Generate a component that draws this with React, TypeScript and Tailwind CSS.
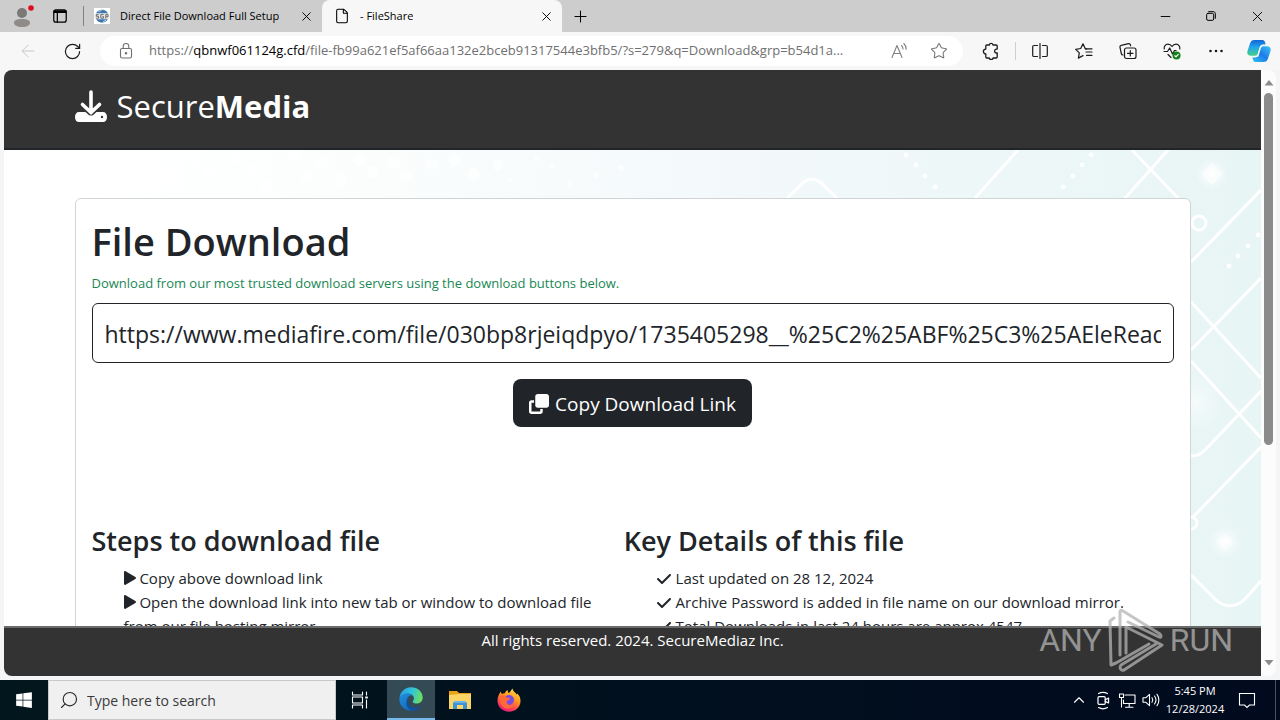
import type { ReactNode } from "react";
import { ArrowLeft, ChevronUp, File, Minus, Plus, RotateCw, Search, Star, X } from "lucide-react";
import { FaCheck, FaClone, FaWindows } from "react-icons/fa6";

// ─── Data ─────────────────────────────────────────────────────────────────────

const STEPS = [
  "Copy above download link",
  "Open the download link into new tab or window to download file from our file hosting mirror.",
];

const DETAILS = [
  "Last updated on 28 12, 2024",
  "Archive Password is added in file name on our download mirror.",
  "Total Downloads in last 24 hours are approx 4547",
];

const DOWNLOAD_URL =
  "https://www.mediafire.com/file/030bp8rjeiqdpyo/1735405298__%25C2%25ABF%25C3%25AEleReady_Full_Setup.zip";

const URL_PATH = "/file-fb99a621ef5af66aa132e2bceb91317544e3bfb5/?s=279&q=Download&grp=b54d1a...";

// ─── Icons ────────────────────────────────────────────────────────────────────

function Line({ size = 18, width = 1.1, children }: { size?: number; width?: number; children: ReactNode }) {
  return (
    <svg
      width={size}
      height={size}
      viewBox="0 0 18 18"
      fill="none"
      stroke="currentColor"
      strokeWidth={width}
      strokeLinecap="round"
      strokeLinejoin="round"
      aria-hidden="true"
    >
      {children}
    </svg>
  );
}

function Avatar() {
  return (
    <svg width="24" height="22" viewBox="-1 0 24 22" aria-hidden="true">
      <circle cx="11" cy="8" r="5" fill="#7b7876" />
      <path d="M3 18c0-3 3-4 8-4s8 1 8 4c0 2-3 4-8 4s-8-2-8-4z" fill="#8e8b89" />
      <circle cx="20" cy="3" r="2.800" fill="#e00b1c" />
    </svg>
  );
}

function Workspaces() {
  return (
    <Line size={16} width={1.4}>
      <rect x="2" y="2" width="14" height="14" rx="2.500" />
      <path d="M2 5h14M6 5v11" />
      <path d="M3 3.600h12" strokeWidth="2.400" />
    </Line>
  );
}

function SiteGlobe() {
  return (
    <svg width="16" height="16" viewBox="0 0 16 16" className="shrink-0" aria-hidden="true">
      <rect width="16" height="16" fill="#fff" />
      <circle cx="8" cy="8" r="6.600" fill="#8eb4d6" />
      <path d="M2.500 5A6.600 6.600 0 0 1 13.500 5zM2.500 11.500a6.600 6.600 0 0 0 11 0z" fill="#3d77ac" />
      <path d="M4.500 3.500l3-1M9 13.800l3-1.500" stroke="#dce9f3" strokeWidth=".8" />
      <rect x="0.500" y="5.500" width="15" height="5.500" rx="1" fill="#e6e8ea" />
      <path
        d="M4.600 6.600H2.400v1.700h2.200v1.900H2.200M9.600 6.600H6.800v3.600h2.800V8.600H8.400M11.800 10.600v-4h2.200v2.200h-2"
        fill="none"
        stroke="#6d6a68"
        strokeWidth="1"
      />
    </svg>
  );
}

function LockGlyph() {
  return (
    <Line>
      <rect x="3.500" y="6.500" width="11" height="9.500" rx="1.600" />
      <path d="M6.200 6.500V4.300a2.800 2.800 0 0 1 5.600 0v2.200" />
      <circle cx="9" cy="11.300" r=".7" fill="currentColor" />
    </Line>
  );
}

function ReadAloud() {
  return (
    <Line>
      <path d="M2 15.500L7 3.500l5 12M3.700 11.500h6.600" />
      <path d="M11.500 3.500c1 .9 1.500 2 1.500 3.500M13.800 1.500c1.600 1.500 2.400 3.400 2.400 5.700" />
    </Line>
  );
}

function Extensions() {
  return (
    <Line width={1.3}>
      <path d="M4.800 3h2.400a2 2 0 0 1 3.900 0h3.100c.6 0 1 .4 1 1v3.100h-1.100a2 2 0 0 0 0 3.900h1.100V15c0 .6-.4 1-1 1h-3.100a2 2 0 0 1-3.900 0H4.800c-.6 0-1-.4-1-1v-3.100a2 2 0 0 1 0-4.800V4c0-.6.4-1 1-1z" />
    </Line>
  );
}

function SplitScreen() {
  return (
    <Line width={1.2}>
      <path d="M6.500 3.500H3c-.8 0-1.300.5-1.300 1.300v8.400c0 .8.500 1.300 1.300 1.300h3.500M11.500 3.500H15c.8 0 1.300.5 1.300 1.300v8.400c0 .8-.5 1.300-1.300 1.300h-3.500M9 1.500v15" />
    </Line>
  );
}

function Favorites() {
  return (
    <Line width={1.2}>
      <path d="M11.500 6.800h-1.200L8 1.800 5.700 6.500l-5 .8 3.600 3.600-.9 5.200L8 13.600" />
      <path d="M10.500 6.800H17M11 10h6M11.500 13.300H17" />
    </Line>
  );
}

function Collections() {
  return (
    <Line width={1.2}>
      <path d="M4 13c-1 0-1.500-.6-1.700-1.500L1 5.300c-.2-1 .3-1.700 1.200-1.900l7.300-1.700c1-.2 1.600.2 1.900 1.100l.3 1" />
      <rect x="5.500" y="6" width="11.500" height="10.500" rx="2" />
      <path d="M11.300 8.500v5.500M8.500 11.300H14" />
    </Line>
  );
}

function Performance() {
  return (
    <Line width={1.2}>
      <path d="M8 15.500L5 12.500M1.200 7C.8 4.300 2.500 2.200 4.900 2.200c1.700 0 3.100.8 4.100 2.300 1-1.500 2.400-2.300 4.100-2.300 2.400 0 4.100 2.100 3.700 4.800" />
      <path d="M1 9.500h3.500L6.700 6l2.800 6 2-3.500H13" />
      <circle cx="13.500" cy="13.500" r="4" fill="#13801a" stroke="none" />
      <path d="M11.800 13.800l1.200 1 2.200-2.400" stroke="#fff" />
    </Line>
  );
}

function Copilot() {
  return (
    <svg width="24" height="24" viewBox="0 0 24 24" aria-hidden="true">
      <defs>
        <linearGradient id="cpA" x1="0" y1="0" x2="0" y2="1">
          <stop offset="0" stopColor="#1264d3" />
          <stop offset=".45" stopColor="#1fa4ec" />
          <stop offset="1" stopColor="#48cf87" />
        </linearGradient>
        <linearGradient id="cpB" x1="1" y1="0" x2="0" y2="1">
          <stop offset="0" stopColor="#3ac6f2" />
          <stop offset=".5" stopColor="#1f7bea" />
          <stop offset="1" stopColor="#2fc4f0" />
        </linearGradient>
      </defs>
      <path
        d="M7.500 1h7.800c1.500 0 2.200.9 2.700 2.300l.6 2.200h-2.400c-2 0-2.900 1-3.500 3l-1.800 6c-.5 1.500-1.200 2.200-2.900 2.200H3.800C.8 16.700-.2 14.600.5 12L3 4.500C3.800 2 5 1 7.500 1z"
        fill="url(#cpA)"
      />
      <path
        d="M16.500 23H8.700c-1.500 0-2.200-.9-2.700-2.300l-.6-2.200h2.400c2 0 2.900-1 3.500-3l1.800-6c.5-1.500 1.200-2.200 2.900-2.200h4.200c3 0 4 2.100 3.300 4.700L21 19.500C20.200 22 19 23 16.500 23z"
        fill="url(#cpB)"
      />
      <path d="M12.600 8.700c.5-1.400 1.200-1.700 3-1.700-1.500 1-1.800 2.500-2.400 4.500l-1.500 5c-.5 1.200-1.200 1.700-2.600 1.500 1-.8 1.300-1.800 1.700-3.300z" fill="#f7f7f7" />
    </svg>
  );
}

function DownloadLogo() {
  return (
    <svg width="32" height="32" viewBox="0 0 32 32" aria-hidden="true">
      <path
        d="M4 22h6.500l3 2.700c1.500 1.200 3.500 1.200 5 0l3-2.700H28c2.500 0 4 2 4 5s-1.500 5-4 5H4c-2.500 0-4-2-4-5s1.500-5 4-5z"
        fill="#fff"
      />
      <path d="M16 2v20M7.500 14.500L16 22.500l8.500-8" fill="none" stroke="#fff" strokeWidth="3.600" strokeLinecap="round" />
      <circle cx="27" cy="27" r="1.200" fill="#333" />
    </svg>
  );
}

function PlayMark() {
  return (
    <svg width="12" height="14" viewBox="0 0 12 14" className="inline-block align-[-1px]" aria-hidden="true">
      <path d="M0 1.200C0 .3.800-.2 1.600.3L11.400 6c.8.500.8 1.500 0 2l-9.800 5.700c-.8.500-1.600 0-1.600-.9z" fill="currentColor" />
    </svg>
  );
}

function TaskView() {
  return (
    <Line>
      <path d="M1.500 1v3h10V1M1.500 17v-3h10v3M1.500 6h10v6h-10zM15.500 1v3M15.500 9v8" />
      <path d="M15.500 5.500v2" strokeWidth="2.600" strokeLinecap="butt" />
    </Line>
  );
}

function Edge() {
  return (
    <svg width="24" height="24" viewBox="0 0 24 24" aria-hidden="true">
      <defs>
        <linearGradient id="edTop" x1="0" y1=".3" x2="1" y2=".5">
          <stop offset="0" stopColor="#2a9ee6" />
          <stop offset=".5" stopColor="#2fc3dd" />
          <stop offset="1" stopColor="#6fe05a" />
        </linearGradient>
        <linearGradient id="edBody" x1="0" y1="0" x2="1" y2="1">
          <stop offset="0" stopColor="#1f8fe0" />
          <stop offset="1" stopColor="#0f5cae" />
        </linearGradient>
      </defs>
      <path d="M.5 11C1.300 4.700 6 .3 12 .3c7 0 11.700 4.900 11.700 10.200 0 3.700-2.700 6-6 6-2.300 0-4-.8-4-1.800 0-.7 1.200-1.200 1.200-3.200 0-2.600-2.400-4.700-6-4.700C5 6.800 1.800 8.500.5 11z" fill="url(#edTop)" />
      <path d="M.4 12.500c0-3.700 3.700-6 8-6 2 0 3.700.5 4.700 1.500-2.400.2-5.200 2-5.200 5.700 0 4.800 4.300 7.300 8.300 7.300 2.200 0 4.100-.6 5.600-1.500-2 2.600-5.300 4.300-9.300 4.300C5.800 23.800.4 19 .4 12.500z" fill="url(#edBody)" />
      <path d="M9 11.200c-1.600 5.500 3 9.800 8.200 9.800 1.800 0 3.500-.5 4.600-1.500-1 2-4.300 4.200-8 4.200-5.500 0-8.500-8.700-4.800-12.500z" fill="#124f9c" />
    </svg>
  );
}

function Folder() {
  return (
    <svg width="24" height="20" viewBox="0 0 24 20" aria-hidden="true">
      <path d="M1 1h8l2 2h12v3H1z" fill="#e8a317" />
      <path d="M1 5l10-1h12v15H1z" fill="#fbd566" />
      <path d="M5 19v-6l2-2h10l2 2v6h-4v-4H9v4z" fill="#3d93d6" />
      <path d="M7 11h10l1.500 2h-13z" fill="#69b3e8" />
    </svg>
  );
}

function Firefox() {
  return (
    <svg width="24" height="24" viewBox="0 0 24 24" aria-hidden="true">
      <defs>
        <linearGradient id="ffBody" x1=".8" y1="0" x2=".3" y2="1">
          <stop offset="0" stopColor="#ffe14a" />
          <stop offset=".4" stopColor="#ff9a1f" />
          <stop offset=".75" stopColor="#ff4055" />
          <stop offset="1" stopColor="#e3197f" />
        </linearGradient>
      </defs>
      <path
        d="M3.500 3.500c.3 1 .8 1.800 1.500 2.400.8-.4 1.800-.6 2.700-.5C8.300 3.700 9.400 2.600 11 2c-.4.900-.3 1.800.2 2.600C12.600 5.600 13.200 3 15.600.5c.2 2 1.200 3 2.700 4.300.7.600 1.200 1.300 1.500 2 .2-.5.2-1 .1-1.500C22.600 7.600 23.500 10 23.500 13c0 6-5 10.700-11.500 10.700S.5 19 .5 12.500C.5 8.700 2 6.500 3.500 3.500z"
        fill="url(#ffBody)"
      />
      <circle cx="12" cy="12" r="5" fill="#7a4be0" />
      <path d="M3 8c3-1.500 5-.5 6.500 1.500 1.500.3 3 .3 3.500 1-.5 1.800-3 1.800-3.500 3.500 1 3.500 5 4 7.500 2-1.500 3.500-4 5-7.500 4.500-5-1-7-6-6.500-12.500z" fill="#ff6a36" />
    </svg>
  );
}

function MeetNow() {
  return (
    <Line size={20}>
      <rect x="4.500" y="6" width="6.500" height="7" rx="1" />
      <path d="M11 8.800l3-1.500v4.400l-3-1.500M5 3.200c2.500-1.400 5.500-1.400 8 0M5 15.800c2.500 1.400 5.500 1.400 8 0" />
    </Line>
  );
}

function Network() {
  return (
    <Line>
      <path d="M7 4h10v8.500H5.500V9M11.200 12.500V16M7.500 16.300h7.500M1.500 3h4v3.500h-4zM3.500 6.500v9.500" />
    </Line>
  );
}

function Volume() {
  return (
    <Line>
      <path d="M1 6.800h2.700l3.800-3.500v11.400l-3.800-3.500H1zM10 6.700c.9 1.300.9 3.300 0 4.600M12.500 5c1.700 2.300 1.700 5.700 0 8M15 3.300c2.500 3.300 2.500 8.100 0 11.400" />
    </Line>
  );
}

function Notifications() {
  return (
    <Line>
      <path d="M1.500 2.500h15v11.500h-5L9 16.500 6.500 14h-5z" strokeLinejoin="miter" />
    </Line>
  );
}

// ─── Browser window ───────────────────────────────────────────────────────────

function Tab({ icon, title, active = false }: { icon: ReactNode; title: string; active?: boolean }) {
  return (
    <div className={`flex w-60 items-center gap-2.5 pr-2 pl-3 ${active ? "rounded-t-lg bg-[#f7f7f7]" : ""}`}>
      <button className="flex min-w-0 flex-1 items-center gap-2.5 text-left">
        {icon}
        <span className="truncate whitespace-pre text-[11px]">{title}</span>
      </button>
      <button aria-label={`Close ${title}`}>
        <X size={15} strokeWidth={1.5} />
      </button>
    </div>
  );
}

function ToolButton({ label, children }: { label: string; children: ReactNode }) {
  return (
    <button aria-label={label} className="flex w-11 shrink-0 items-center justify-center">
      {children}
    </button>
  );
}

function TabStrip() {
  return (
    <div className="flex h-8 shrink-0 bg-[#cdcdcd] text-black">
      <button aria-label="Profile" className="flex w-11 items-center justify-center">
        <Avatar />
      </button>
      <button aria-label="Workspaces" className="flex w-8 items-center justify-center">
        <Workspaces />
      </button>
      <div className="my-1.5 mr-[-2px] ml-[7px] w-px bg-[#808080]" />
      <Tab icon={<SiteGlobe />} title="Direct File Download Full Setup" />
      <Tab active icon={<File size={16} strokeWidth={1.6} className="shrink-0" />} title="- FileShare" />
      <button aria-label="New tab" className="flex w-9 items-center justify-center">
        <Plus size={19} strokeWidth={1.3} />
      </button>
      <div className="ml-auto flex">
        <button aria-label="Minimize" className="flex w-[46px] items-center justify-center">
          <Minus size={15} strokeWidth={1.5} />
        </button>
        <button aria-label="Restore" className="flex w-[46px] items-center justify-center">
          <Line size={12} width={1.5}>
            <rect x="2.500" y="5" width="10.500" height="10.500" rx="2" />
            <path d="M5.500 2.500h7c1.700 0 3 1.300 3 3v7" />
          </Line>
        </button>
        <button aria-label="Close" className="flex w-[46px] items-center justify-center">
          <X size={17} strokeWidth={1.3} />
        </button>
      </div>
    </div>
  );
}

function Toolbar() {
  return (
    <div className="flex h-[38px] shrink-0 bg-[#f7f7f7] pl-1.5 text-[#1b1b1b]">
      <button aria-label="Back" className="flex w-11 shrink-0 items-center justify-center text-[#c8c8c8]">
        <ArrowLeft size={20} strokeWidth={1.2} />
      </button>
      <ToolButton label="Refresh">
        <RotateCw size={19} strokeWidth={1.5} />
      </ToolButton>
      <div className="mx-1.5 my-1 flex min-w-0 flex-1 items-center rounded-full bg-white pr-1 pl-[17px] text-[13px] text-[#707070]">
        <LockGlyph />
        <label htmlFor="address" className="ml-3.5">
          https://<span className="text-black">qbnwf061124g.cfd</span>
        </label>
        <input
          id="address"
          readOnly
          defaultValue={URL_PATH}
          className="min-w-0 flex-1 bg-transparent text-ellipsis outline-none"
        />
        <button aria-label="Read aloud" className="flex w-10 shrink-0 items-center justify-center text-[#808080]">
          <ReadAloud />
        </button>
        <button aria-label="Add to favorites" className="flex w-10 shrink-0 items-center justify-center text-[#767676]">
          <Star size={18} strokeWidth={1.4} />
        </button>
      </div>
      <ToolButton label="Extensions">
        <Extensions />
      </ToolButton>
      <div className="mx-0.5 my-2.5 w-px shrink-0 bg-[#cfcfcf]" />
      <ToolButton label="Split screen">
        <SplitScreen />
      </ToolButton>
      <ToolButton label="Favorites">
        <Favorites />
      </ToolButton>
      <ToolButton label="Collections">
        <Collections />
      </ToolButton>
      <ToolButton label="Browser essentials">
        <Performance />
      </ToolButton>
      <ToolButton label="Settings and more">
        <svg width="14" height="4" viewBox="0 0 14 4" fill="currentColor" aria-hidden="true">
          <circle cx="1.500" cy="2" r="1.300" />
          <circle cx="7" cy="2" r="1.300" />
          <circle cx="12.500" cy="2" r="1.300" />
        </svg>
      </ToolButton>
      <button aria-label="Copilot" className="flex w-[42px] shrink-0 items-center justify-center">
        <Copilot />
      </button>
    </div>
  );
}

function Scrollbar() {
  return (
    <div className="flex w-[15px] shrink-0 flex-col items-center rounded-r-lg bg-[#fcfcfc] pt-2.5 pb-2.5">
      <svg width="10" height="6" viewBox="0 0 10 6" fill="#8b8b8b" aria-hidden="true">
        <path d="M5 0l4.500 5.500H.5z" />
      </svg>
      <div className="mt-[7px] h-[60%] w-[9px] rounded-full bg-[#8b8b8b]" />
      <svg width="10" height="6" viewBox="0 0 10 6" fill="#8b8b8b" className="mt-auto" aria-hidden="true">
        <path d="M5 5.500L.5 0h9z" />
      </svg>
    </div>
  );
}

// ─── Web page ─────────────────────────────────────────────────────────────────

const DOTS = [
  [902, 5], [912, 15], [921, 26], [931, 37],
  [1087, 5], [1078, 15], [1069, 26], [1059, 37],
  [1225, 116], [1234, 106], [1244, 96], [1254, 85],
];

const SPECKS = [
  [145, 12], [166, 28], [190, 8], [205, 22], [232, 7], [248, 19], [262, 36], [290, 6],
  [303, 27], [318, 14], [337, 30], [355, 10], [369, 22], [390, 12], [402, 26], [428, 14],
  [451, 10], [470, 24], [494, 15], [506, 30], [533, 8], [548, 16], [566, 34], [592, 25], [617, 18],
];

function Backdrop() {
  return (
    <svg
      className="absolute inset-0 h-full w-full"
      viewBox="0 0 1257 476"
      preserveAspectRatio="xMaxYMin slice"
      aria-hidden="true"
    >
      <defs>
        <linearGradient id="bgFade" x1="0" y1="0" x2="1" y2="0">
          <stop offset=".08" stopColor="#ffffff" />
          <stop offset=".3" stopColor="#fbfdfd" />
          <stop offset=".55" stopColor="#f4f9fb" />
          <stop offset=".8" stopColor="#edf7f7" />
          <stop offset="1" stopColor="#e8f5f5" />
        </linearGradient>
        <radialGradient id="bgGlow">
          <stop offset="0" stopColor="#ffffff" />
          <stop offset=".3" stopColor="#ffffff" stopOpacity=".6" />
          <stop offset="1" stopColor="#ffffff" stopOpacity="0" />
        </radialGradient>
      </defs>
      <rect width="1257" height="476" fill="url(#bgFade)" />
      <g fill="#fff">
        {SPECKS.map(([x, y]) => (
          <circle key={`${x}-${y}`} cx={x} cy={y} r={x > 500 ? 3 : 6} fillOpacity=".6" />
        ))}
        {DOTS.map(([x, y]) => (
          <circle key={`${x}-${y}`} cx={x} cy={y} r="2.400" />
        ))}
        <path d="M1208 13l11 11-11 11-11-11z" fillOpacity=".6" />
        <path d="M1221 383l8 9-8 9-8-9z" fillOpacity=".5" />
      </g>
      <circle cx="1208" cy="24" r="16" fill="url(#bgGlow)" />
      <circle cx="1221" cy="392" r="16" fill="url(#bgGlow)" />
      <circle cx="1191" cy="252" r="28" fill="url(#bgGlow)" fillOpacity=".6" />
      <g fill="none" stroke="#fff" strokeWidth="3">
        <path d="M783 48l14-13c5-7 15-8 22 0l14 13" />
        <path d="M1014 0l-43 48M1128 0l46 48M1164 0l-43 48M1257 40l-70 72" />
        <path d="M1187 152l70 76M1257 128l-70 72M1187 211l70 77" />
        <path d="M1187 306c7 0 10-2 15-7l55-58M1257 297l-68 70" />
        <path d="M1187 425l24 24c9 9 21 9 30 0l16-18" />
        <circle cx="1195" cy="73" r="7" />
        <circle cx="1187" cy="373" r="6" />
      </g>
    </svg>
  );
}

function DownloadPage() {
  return (
    <div className="relative flex min-w-0 flex-1 flex-col overflow-hidden rounded-l-lg bg-white text-[#212529]">
      <header className="h-20 shrink-0 border-b-2 border-[#212529] bg-[#333333]">
        <div className="mx-auto flex h-[72px] max-w-[1116px] items-center gap-2.5 text-white">
          <DownloadLogo />
          <span className="text-[31px]">
            Secure<b className="font-bold">Media</b>
          </span>
        </div>
      </header>

      <main className="relative min-h-0 flex-1 overflow-hidden pt-12">
        <Backdrop />
        <div className="relative mx-auto max-w-[1116px] rounded-md border border-[#cfd4d5] bg-white p-4">
          <h1 className="mb-1 text-[38px] leading-[52px] font-semibold">File Download</h1>
          <label htmlFor="link" className="block text-[13px] leading-6 text-[#198754]">
            Download from our most trusted download servers using the download buttons below.
          </label>
          <input
            id="link"
            readOnly
            defaultValue={DOWNLOAD_URL}
            className="mt-2 h-[60px] w-full rounded-md border border-[#212529] bg-white px-3 pt-0.5 text-[23px] outline-none"
          />
          <button className="mx-auto mt-4 flex h-12 items-center justify-center gap-1.5 rounded-lg bg-[#212529] px-4 pt-0.5 text-[19px] text-white">
            <FaClone size={20} />
            Copy Download Link
          </button>

          {/* Steps and details */}
          <div className="mt-[97px] grid grid-cols-[49%_49%] gap-0.5">
            <section>
              <h2 className="mb-2 text-[27px] leading-[34px] font-semibold">Steps to download file</h2>
              <ul className="pr-6 pl-8 text-[15px] leading-6">
                {STEPS.map((step) => (
                  <li key={step}>
                    <PlayMark /> {step}
                  </li>
                ))}
              </ul>
            </section>
            <section>
              <h2 className="mb-2 text-[27px] leading-[34px] font-semibold">Key Details of this file</h2>
              <ul className="pl-8 text-[15px] leading-6">
                {DETAILS.map((detail) => (
                  <li key={detail}>
                    <FaCheck size={16} className="inline-block align-[-3px]" /> {detail}
                  </li>
                ))}
              </ul>
            </section>
          </div>
        </div>
      </main>

      <footer className="h-[50px] shrink-0 border-t-2 border-[#6b6b6b] bg-[#333333] text-center text-[15px] leading-6 text-white">
        All rights reserved. 2024. SecureMediaz Inc.
      </footer>

      {/* Watermark */}
      <div className="pointer-events-none absolute right-7 bottom-1 flex items-center gap-1.5 font-[Roboto,sans-serif] text-[32px] text-[#b4b4b4] opacity-75">
        <span>ANY</span>
        <svg width="56" height="64" viewBox="0 0 56 64" fill="none" stroke="currentColor" strokeWidth="3" strokeLinejoin="round" strokeLinecap="round" aria-hidden="true">
          <path d="M12 47V4c0-2 1-2 3-1l37 23c2 2 1 4-1 3L20 14" />
          <path d="M6 10l-4 3 1 44 5-2 33-19" />
          <path d="M18 45V19l36 18-38 25c-3 1-5-2-3-5l35-21" />
        </svg>
        <span>RUN</span>
      </div>
    </div>
  );
}

// ─── Taskbar ──────────────────────────────────────────────────────────────────

function Taskbar() {
  return (
    <div className="flex h-10 shrink-0 bg-linear-to-r from-[#02161d] to-[#010a1e] text-white">
      <button aria-label="Start" className="flex w-12 items-center justify-center">
        <FaWindows size={18} />
      </button>
      <label className="flex w-72 items-center gap-2 border border-[#c9c9c9] bg-[#f0f0f0] pl-2.5 text-[#2b2b2b]">
        <Search size={20} strokeWidth={1.4} className="-scale-x-100" />
        <input
          aria-label="Search"
          placeholder="Type here to search"
          className="min-w-0 flex-1 bg-transparent text-[14px] outline-none placeholder:text-[#3a3a3a]"
        />
      </label>
      <button aria-label="Task view" className="mr-[3px] flex w-12 items-center justify-center">
        <TaskView />
      </button>
      <button aria-label="Edge" className="flex w-12 items-center justify-center border-b-2 border-[#76b9ed] bg-[#344a54]">
        <Edge />
      </button>
      <button aria-label="File Explorer" className="flex w-[50px] items-center justify-center">
        <Folder />
      </button>
      <button aria-label="Firefox" className="flex w-12 items-center justify-center">
        <Firefox />
      </button>

      {/* Tray */}
      <div className="ml-auto flex items-center">
        <button aria-label="Show hidden icons" className="flex w-6 justify-center">
          <ChevronUp size={18} strokeWidth={1.5} />
        </button>
        <button aria-label="Meet now" className="flex w-6 justify-center">
          <MeetNow />
        </button>
        <button aria-label="Network" className="flex w-6 justify-center">
          <Network />
        </button>
        <button aria-label="Volume" className="flex w-6 justify-center">
          <Volume />
        </button>
        <button className="w-16 text-center text-[11px] leading-[18px]">
          5:45 PM
          <br />
          12/28/2024
        </button>
        <button aria-label="Notifications" className="flex w-10 justify-center">
          <Notifications />
        </button>
        <div className="ml-2 h-10 w-[5px] border-l border-[#4a525e]" />
      </div>
    </div>
  );
}

export default function App() {
  return (
    <div className="flex h-screen flex-col overflow-hidden bg-[#f3f5f7] font-['Open_Sans',sans-serif]">
      <TabStrip />
      <Toolbar />
      <div className="mx-1 mb-1 flex min-h-0 flex-1">
        <DownloadPage />
        <Scrollbar />
      </div>
      <Taskbar />
    </div>
  );
}
